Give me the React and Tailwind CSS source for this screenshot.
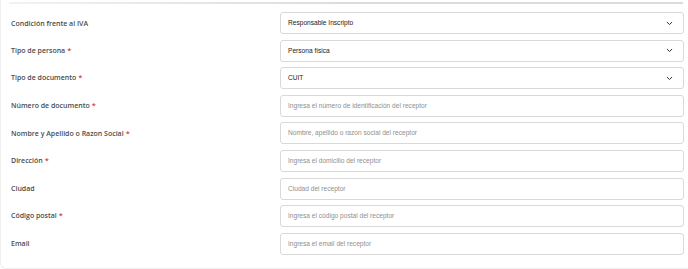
import React from 'react';

const fields = [
  { label: 'Condición frente al IVA', type: 'select', value: 'Responsable Inscripto' },
  { label: 'Tipo de persona', required: true, type: 'select', value: 'Persona física' },
  { label: 'Tipo de documento', required: true, type: 'select', value: 'CUIT' },
  { label: 'Número de documento', required: true, placeholder: 'Ingresa el número de identificación del receptor' },
  { label: 'Nombre y Apellido o Razon Social', required: true, placeholder: 'Nombre, apellido o razon social del receptor' },
  { label: 'Dirección', required: true, placeholder: 'Ingresa el domicilio del receptor' },
  { label: 'Ciudad', placeholder: 'Ciudad del receptor' },
  { label: 'Código postal', required: true, placeholder: 'Ingresa el código postal del receptor' },
  { label: 'Email', placeholder: 'Ingresa el email del receptor' },
];

const Chevron = () => (
  <svg width="7" height="5" viewBox="0 0 7 5" fill="none" className="shrink-0">
    <path d="M1.2 1.3 L3.5 3.5 L5.8 1.3" stroke="#333" strokeWidth="1" strokeLinecap="round" strokeLinejoin="round" />
  </svg>
);

const App = () => {
  return (
    <div className="w-[688px] h-[269px] bg-white overflow-hidden">
      <div className="h-[269px] border-l border-b border-[#efefef] rounded-bl-[6px]">
        <div className="pt-[2px] pl-[8px] pr-[5px]">
          <div className="h-[2px] bg-gradient-to-r from-[#f2f2f2] via-[#dcdcdc] to-[#dcdcdc]" />
        </div>

        <div className="flex flex-col gap-[5.6px] pt-[8px]">
          {fields.map((f) => (
            <div key={f.label} className="flex items-center">
              <div
                className="w-[279px] pl-[10px] text-[7px] font-semibold text-[#4a4a4a] leading-none"
                style={{ fontFamily: '"Open Sans", "Noto Sans", sans-serif' }}
              >
                {f.label}
                {f.required && <span className="text-[#d9404a] ml-[2px] text-[7.5px] align-top">*</span>}
              </div>
              <div
                className="w-[404px] h-[22px] border border-[#d9d9d9] rounded-[3px] flex items-center justify-between pl-[7px] pr-[10px] text-[6.6px]"
                style={{ fontFamily: '"Liberation Sans", Arial, sans-serif' }}
              >
                {f.type === 'select' ? (
                  <>
                    <span className="text-[#222]">{f.value}</span>
                    <Chevron />
                  </>
                ) : (
                  <span className="text-[#8f8f8f]">{f.placeholder}</span>
                )}
              </div>
            </div>
          ))}
        </div>
      </div>
    </div>
  );
};

export default App;
